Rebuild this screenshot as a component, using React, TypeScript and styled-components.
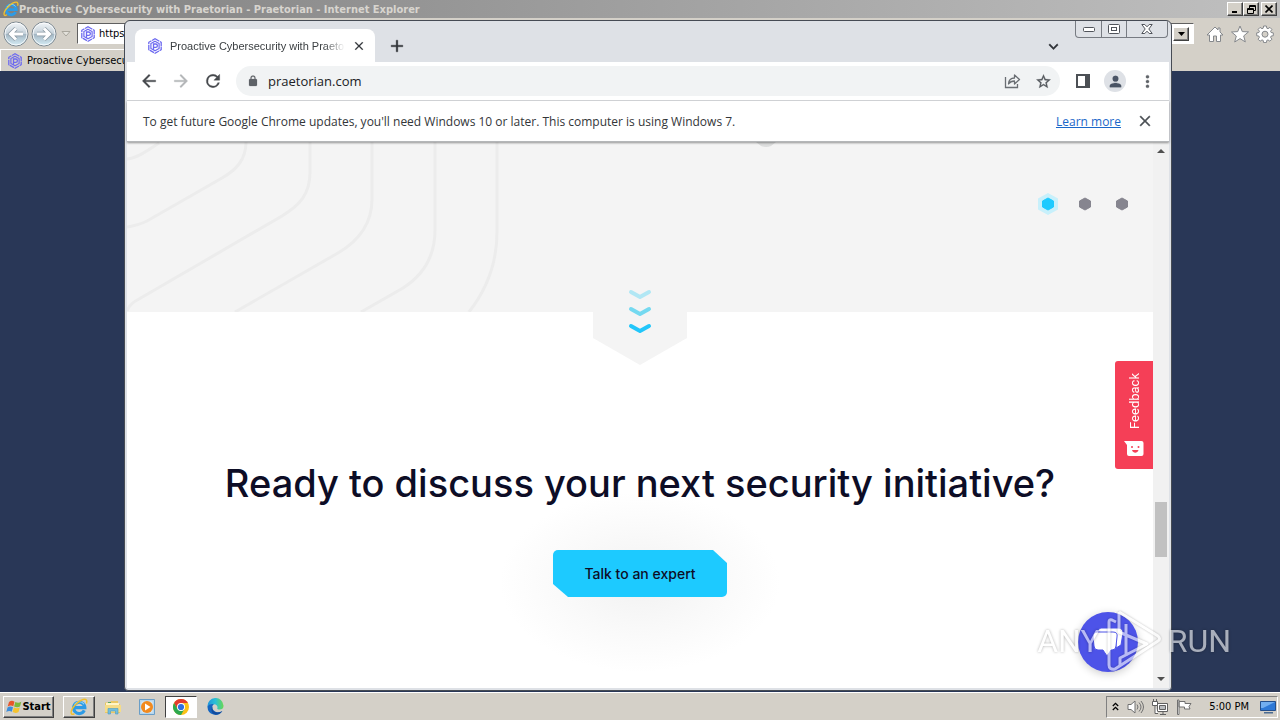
import React from 'react';
import styled, { createGlobalStyle, css } from 'styled-components';

const tahoma = '"DejaVu Sans Condensed", "DejaVu Sans", sans-serif';
const humanist = '"Open Sans", "Noto Sans", sans-serif';
const grotesk = 'Inter, "Liberation Sans", sans-serif';

const GlobalStyle = createGlobalStyle`
  *, *::before, *::after { box-sizing: border-box; }
  body { margin: 0; overflow: hidden; font-family: ${tahoma}; }
  button { padding: 0; border: 0; background: none; color: inherit; font: inherit; cursor: pointer; }
  svg { display: block; flex: none; }
  input { min-width: 0; }
`;

const Desktop = styled.div`
  position: relative;
  display: flex;
  flex-direction: column;
  height: 100vh;
  overflow: hidden;
  background: #293757;
`;

/* Internet Explorer window */
const Explorer = styled.section`
  display: flex;
  flex: 1;
  flex-direction: column;
  min-height: 0;
`;
const ExplorerTitle = styled.header`
  display: flex;
  align-items: center;
  justify-content: space-between;
  height: 18px;
  padding: 0 3px;
  background: linear-gradient(90deg, #808080, #c0c0c0);
  color: #d8d5cf;
  font-size: 11px;
  font-weight: bold;
`;
const TitleText = styled.div`
  display: flex;
  align-items: center;
  white-space: nowrap;
`;
const raised = css`
  border: 1px solid;
  border-color: #fff #404040 #404040 #fff;
  box-shadow: inset -1px -1px #808080;
`;
const ClassicButtons = styled.div`
  display: flex;
  button:last-child { margin-left: 2px; }
`;
const ClassicButton = styled.button`
  ${raised}
  display: grid;
  place-items: center;
  width: 16px;
  height: 14px;
  background: #d4d0c8;
`;
const ExplorerBar = styled.div`
  display: flex;
  align-items: center;
  height: 31px;
  padding: 0 6px 0 2px;
  background: #d4d0c8;
`;
const AddressBox = styled.label`
  display: flex;
  flex: 1;
  align-items: center;
  height: 21px;
  margin: 0 12px 0 4px;
  border: 1px solid;
  border-color: #606060 #fff #fff #606060;
  background: #fff;
  padding: 0 4px 0 2px;
  gap: 3px;
  input { flex: 1; padding: 0; border: 0; outline: 0; font: 11px ${tahoma}; color: #000; }
`;
const ExplorerTools = styled.div`
  display: flex;
  gap: 7px;
`;
const ExplorerTabs = styled.div`
  display: flex;
  height: 22px;
  background: #d4d0c8;
`;
const ExplorerTab = styled.div`
  display: flex;
  align-items: center;
  gap: 4px;
  width: 400px;
  padding-left: 6px;
  border-top: 1px solid #fff;
  border-left: 1px solid #fff;
  font-size: 11px;
  white-space: nowrap;
`;

/* Chrome window */
const ChromeWindow = styled.section`
  position: absolute;
  inset: 20px 108px 29px 124px;
  display: flex;
  flex-direction: column;
  overflow: hidden;
  padding: 0 2px 2px;
  border: 1px solid #464b54;
  border-radius: 6px 6px 4px 4px;
  background: #dee1e6;
`;
const TabStrip = styled.div`
  display: flex;
  align-items: flex-end;
  height: 41px;
  flex: none;
  padding-left: 8px;
`;
const Tab = styled.div`
  display: flex;
  align-items: center;
  width: 240px;
  height: 33px;
  padding: 0 9px 0 12px;
  gap: 7px;
  border-radius: 8px 8px 0 0;
  background: #fff;
`;
const TabTitle = styled.span`
  flex: 1;
  overflow: hidden;
  color: #3c4043;
  font: 11px "Liberation Sans", sans-serif;
  white-space: nowrap;
  mask-image: linear-gradient(90deg, #000 88%, transparent);
`;
const StripButton = styled.button<{ $push?: boolean }>`
  display: grid;
  place-items: center;
  width: 28px;
  height: 28px;
  margin: ${(p) => (p.$push ? '0 102px 2px auto' : '0 0 2px 8px')};
`;
const CaptionButtons = styled.div`
  position: absolute;
  top: 0;
  right: 3px;
  display: flex;
  height: 17px;
  border: 1px solid #777b82;
  border-top: 0;
  border-radius: 0 0 4px 4px;
`;
const CaptionButton = styled.button<{ $wide?: boolean }>`
  display: grid;
  place-items: center;
  width: ${(p) => (p.$wide ? 41 : 25)}px;
  & + & { border-left: 1px solid #777b82; }
`;
const Toolbar = styled.div`
  display: flex;
  align-items: center;
  flex: none;
  height: 39px;
  padding: 0 11px;
  gap: 10px;
  border-bottom: 1px solid #d5d7da;
  background: #fff;
`;
const IconButton = styled.button`
  display: grid;
  place-items: center;
  width: 22px;
  height: 22px;
`;
const Omnibox = styled.label`
  display: flex;
  flex: 1;
  align-items: center;
  height: 30px;
  margin: 0 2px;
  padding: 0 6px 0 11px;
  gap: 9px;
  border-radius: 15px;
  background: #f1f3f4;
  input { flex: 1; padding: 0; border: 0; outline: 0; background: none; color: #202124; font: 13px ${humanist}; }
`;
const Avatar = styled.span`
  display: grid;
  place-items: center;
  width: 22px;
  height: 22px;
  border-radius: 50%;
  background: #dee1e6;
`;
const InfoBar = styled.div`
  position: relative;
  z-index: 1;
  display: flex;
  align-items: center;
  flex: none;
  height: 41px;
  padding: 0 15px 0 16px;
  border-bottom: 1px solid #b4b6b8;
  background: #fff;
  box-shadow: 0 1px 2px #0006;
  color: #333639;
  font: 12px ${humanist};
  white-space: nowrap;
  p { flex: 1; margin: 0; }
  a { margin-right: 15px; color: #1a67c9; }
`;
const Viewport = styled.div`
  display: flex;
  flex: 1;
  min-height: 0;
  background: #fff;
`;
const Page = styled.main`
  position: relative;
  display: flex;
  flex: 1;
  flex-direction: column;
  overflow: hidden;
`;
const Hero = styled.section`
  position: relative;
  display: flex;
  flex: none;
  justify-content: space-between;
  height: 170px;
  background: #f4f4f4;
`;
const Slides = styled.div`
  display: flex;
  gap: 15px;
  padding: 51px 20px 0 0;
`;
const SlideButton = styled.button`
  width: 22px;
  height: 22px;
`;
const HeroBubble = styled.svg`
  position: absolute;
  top: 0;
  left: calc(50% + 116px);
`;
const ScrollHint = styled.svg`
  position: absolute;
  top: 143px;
  left: calc(50% - 47px);
`;
const CallToAction = styled.section`
  display: flex;
  flex: 1;
  flex-direction: column;
  align-items: center;
  padding-top: 146px;
  gap: 42px;
  background: radial-gradient(ellipse 140px 90px at 50% 270px, #f2f2f2, #fafafa 60%, #fff);
`;
const Heading = styled.h1`
  margin: 0;
  color: #0d0d26;
  font: 500 38px/50px ${grotesk};
  white-space: nowrap;
`;
const ExpertButton = styled.button`
  display: grid;
  place-items: center;
  width: 174px;
  height: 47px;
  border-radius: 5px;
  background: #1dcaff;
  clip-path: polygon(0 0, 160px 0, 100% 13px, 100% 100%, 15px 100%, 0 34px);
  color: #0d0d26;
  font: 500 14px/20px ${grotesk};
`;
const FeedbackButton = styled.button`
  position: absolute;
  top: 219px;
  right: 0;
  display: flex;
  flex-direction: column;
  align-items: center;
  justify-content: space-between;
  width: 38px;
  height: 108px;
  padding: 12px 0;
  border-radius: 3px 0 0 3px;
  background: #f53f57;
  color: #fff;
  font: 13px Roboto, sans-serif;
  span { writing-mode: vertical-rl; rotate: 180deg; }
`;
const ChatButton = styled.button`
  position: absolute;
  right: 15px;
  bottom: 16px;
  display: grid;
  place-items: center;
  width: 60px;
  height: 60px;
  border-radius: 50%;
  background: #4d53e8;
  box-shadow: 0 2px 8px #0003;
`;
const ScrollTrack = styled.div`
  display: flex;
  flex-direction: column;
  align-items: center;
  width: 16px;
  padding: 7px 0;
  background: #f1f1f1;
`;
const ScrollThumb = styled.div`
  width: 12px;
  height: 55px;
  margin: 349px 0 auto;
  background: #c1c1c1;
`;

/* Taskbar */
const Taskbar = styled.footer`
  display: flex;
  align-items: center;
  flex: none;
  height: 28px;
  padding: 0 2px 0 3px;
  border-top: 1px solid #fff;
  background: #d4d0c8;
  font-size: 11px;
`;
const StartButton = styled.button`
  ${raised}
  display: flex;
  align-items: center;
  justify-content: center;
  width: 51px;
  height: 22px;
  margin-right: 9px;
  font-weight: bold;
`;
const TaskButton = styled.button<{ $state?: 'open' | 'active' }>`
  display: grid;
  place-items: center;
  width: 32px;
  height: 22px;
  margin-right: 2px;
  ${(p) => p.$state === 'open' && raised}
  ${(p) => p.$state === 'active' && css`border: 1px solid; border-color: #404040 #fff #fff #404040; background: #fff;`}
`;
const Tray = styled.div`
  display: flex;
  align-items: center;
  height: 22px;
  margin-left: auto;
  padding: 0 1px 0 5px;
  gap: 8px;
  border: 1px solid;
  border-color: #808080 #fff #fff #808080;
  time { margin: 0 3px 0 9px; white-space: nowrap; }
`;

const Watermark = styled.div`
  position: absolute;
  right: 49px;
  bottom: 48px;
  display: flex;
  align-items: center;
  gap: 6px;
  color: #fff;
  font: 400 32px/60px Roboto, sans-serif;
  opacity: 0.6;
  text-shadow: 0 0 3px #0008;
  pointer-events: none;
  svg { filter: drop-shadow(0 0 1px #0006); }
`;

const Favicon = ({ size = 16 }: { size?: number }) => (
  <svg width={size} height={size} viewBox="0 0 16 16" fill="none" stroke="#6d6af0">
    <path d="M8 .8 14.2 4.3v7.4L8 15.2 1.8 11.7V4.3z" strokeWidth="1.3" strokeDasharray="5 .7" />
    <path d="M8 3.2 12.1 5.6v4.8L8 12.8 3.9 10.4V5.6z" strokeWidth="1.2" />
    <path d="M6.5 12V6h2.2a1.7 1.7 0 0 1 0 3.4H6.5" strokeWidth="1.3" />
  </svg>
);

const IeLogo = ({ size = 16 }: { size?: number }) => (
  <svg width={size} height={size} viewBox="0 0 16 16" fill="none">
    <path d="M12.7 11A5 5 0 1 1 13.200 8.600H4" stroke="#2d9be6" strokeWidth="2.800" />
    <path d="M12.500 5.500A5 5 0 0 0 4 6" stroke="#8ad6fb" />
    <path d="M14.600 4.800c.8-2.200.2-3.600-1.400-3.600C9 1.200 1.500 8 1 12.600c-.2 2 1 2.400 3 1.200" stroke="#f2c02c" strokeWidth="1.300" />
  </svg>
);

const RoundArrow = ({ back }: { back?: boolean }) => (
  <svg width="28" height="26" viewBox="0 0 28 26">
    <defs>
      <linearGradient id={back ? 'orbBack' : 'orbNext'} x2="0" y2="1">
        <stop stopColor="#f4f7f9" /><stop offset=".48" stopColor="#c5d1da" /><stop offset=".52" stopColor="#a4b7c4" /><stop offset="1" stopColor="#d7eef7" />
      </linearGradient>
    </defs>
    <circle cx="14" cy="13" r="12" fill={`url(#${back ? 'orbBack' : 'orbNext'})`} stroke="#7b8790" />
    <circle cx="14" cy="13" r="11" fill="none" stroke="#fff" strokeOpacity=".8" />
    <path d={back ? 'M21 13H9M14 7.500 8.500 13l5.500 5.500' : 'M7 13h12M14 7.500l5.500 5.500-5.500 5.500'} fill="none" stroke="#8a98a2" strokeWidth="4.500" />
    <path d={back ? 'M21 13H9M14 7.500 8.500 13l5.500 5.500' : 'M7 13h12M14 7.500l5.500 5.500-5.500 5.500'} fill="none" stroke="#fff" strokeWidth="3" />
  </svg>
);

const Glyph = ({ d, size = 18, color = '#5f6368' }: { d: string; size?: number; color?: string }) => (
  <svg width={size} height={size} viewBox="0 0 24 24" fill={color} stroke={color} strokeWidth=".4"><path d={d} /></svg>
);
const glyphs = {
  back: 'M20 11H7.830l5.590-5.590L12 4l-8 8 8 8 1.410-1.410L7.830 13H20v-2z',
  forward: 'M12 4l-1.410 1.410L16.170 11H4v2h12.170l-5.580 5.590L12 20l8-8z',
  reload: 'M17.650 6.350A7.960 7.960 0 0 0 12 4a8 8 0 1 0 7.730 10h-2.080A6 6 0 1 1 12 6c1.660 0 3.140.69 4.220 1.780L13 11h7V4l-2.350 2.350z',
  lock: 'M18 8h-1V6A5 5 0 0 0 7 6v2H6a2 2 0 0 0-2 2v10a2 2 0 0 0 2 2h12a2 2 0 0 0 2-2V10a2 2 0 0 0-2-2zM9 6a3 3 0 0 1 6 0v2H9V6z',
  close: 'M19 6.410 17.590 5 12 10.590 6.410 5 5 6.410 10.590 12 5 17.590 6.410 19 12 13.410 17.590 19 19 17.590 13.410 12z',
  plus: 'M19 13h-6v6h-2v-6H5v-2h6V5h2v6h6v2z',
  down: 'M7.410 8.590 12 13.170l4.590-4.580L18 10l-6 6-6-6z',
  star: 'm22 9.240-7.190-.62L12 2 9.190 8.630 2 9.240l5.460 4.730L5.820 21 12 17.270 18.180 21l-1.630-7.030L22 9.240zM12 15.400l-3.760 2.270 1-4.280-3.320-2.880 4.380-.38L12 6.100l1.710 4.040 4.380.38-3.320 2.880 1 4.280L12 15.400z',
  person: 'M12 12a4 4 0 1 0 0-8 4 4 0 0 0 0 8zm0 2c-2.670 0-8 1.340-8 4v2h16v-2c0-2.660-5.330-4-8-4z',
  more: 'M12 8a2 2 0 1 0 0-4 2 2 0 0 0 0 4zm0 2a2 2 0 1 0 0 4 2 2 0 0 0 0-4zm0 6a2 2 0 1 0 0 4 2 2 0 0 0 0-4z',
};

const ShareIcon = () => (
  <svg width="17" height="16" viewBox="0 0 17 16" fill="none" stroke="#6a6e73" strokeWidth="1.300">
    <path d="M1.500 4v10.500h12V11" />
    <path d="M4.500 11c.3-4 2.500-6 6-6V2l5 4.500-5 4.500V8c-2.700 0-4.500.8-6 3z" strokeLinejoin="round" />
  </svg>
);

const ExplorerTool = ({ d }: { d: string }) => (
  <svg width="18" height="18" viewBox="0 0 18 18" fill="#fff" stroke="#85888c" fillRule="evenodd" strokeLinejoin="round"><path d={d} /></svg>
);

const Contours = () => (
  <svg width="380" height="170" viewBox="0 0 380 170" fill="none" stroke="#ececec" strokeWidth="3">
    <path d="M0 17c10-1 20-8 32-16M0 85c7-1 12-2 20-6l75-43c14-8 24-18 24-36" />
    <path d="M0 169c2-6 6-9 12-12L155 74c18-11 28-22 28-44V0" />
    <path d="M108 170 211 111c24-14 34-32 34-54V0" />
    <path d="M234 170 276 146c22-14 32-34 32-58V0" />
    <path d="M342 170c18-23 28-48 28-80V0" />
  </svg>
);

const SlideDot = ({ active }: { active?: boolean }) => (
  <svg width="22" height="22" viewBox="0 0 22 22">
    {active && <path d="m11 0 10 5.500v11L11 22 1 16.500v-11z" fill="#c8f0fb" />}
    <path d="m11 5 5.500 3v6L11 17l-5.500-3V8z" fill={active ? '#1dcaff' : '#86858f'} stroke={active ? '#1dcaff' : '#86858f'} strokeLinejoin="round" />
  </svg>
);

const WindowsFlag = () => (
  <svg width="16" height="16" viewBox="0 0 16 16">
    <path d="M3 3c2-1.500 3.500-1.500 5.500-.3L7.300 7.300C5.500 6.200 4 6.300 1.700 7.500z" fill="#e8562a" />
    <path d="M9.300 3c2 1 4 1 6-.2L14 7.500c-2 1-4 .9-5.900-.1z" fill="#7bb93a" />
    <path d="M1.500 8.400C3.500 7.200 5.200 7.300 7 8.300l-1.200 4.400C4 11.700 2.300 11.800.3 12.900z" fill="#3c8ddb" />
    <path d="M7.900 8.500c1.900 1 3.900 1 5.900 0l-1.300 4.500c-2 1.200-4 1.100-5.900.1z" fill="#f5c32e" />
  </svg>
);
const FolderIcon = () => (
  <svg width="18" height="16" viewBox="0 0 18 16">
    <path d="M1 3.500h5l1-1.500h7v3h2v9H1z" fill="#e9c765" />
    <path d="M2 4h13v5H2z" fill="#fff5c8" /><path d="M1 6h16v7H1z" fill="#f5dc88" />
    <path d="M4 15v-5.500h10V15h-2.500v-3h-5v3z" fill="#72bddd" stroke="#4c9cc3" strokeWidth=".6" />
    <path d="M4 3.500h3" stroke="#59a862" />
  </svg>
);
const PlayerIcon = () => (
  <svg width="16" height="16" viewBox="0 0 16 16">
    <path d="M.5.500h15v15H.500z" fill="#b6d6ed" stroke="#6a9ec7" /><path d="M2.500 2.500h11v11h-11z" fill="#dcecf7" />
    <circle cx="8" cy="8" r="6" fill="#f18a1f" /><path d="M6 4.500 11.500 8 6 11.500z" fill="#fff" />
  </svg>
);
const ChromeLogo = () => (
  <svg width="16" height="16" viewBox="0 0 16 16">
    <circle cx="8" cy="8" r="8" fill="#fbc116" />
    <path d="M8 4h6.930A8 8 0 0 0 1.070 4l3.470 6z" fill="#e33b2e" />
    <path d="M4.540 10 1.070 4A8 8 0 0 0 8 16l3.460-6z" fill="#2da94f" />
    <circle cx="8" cy="8" r="4" fill="#fff" /><circle cx="8" cy="8" r="3.100" fill="#2f6fe0" />
  </svg>
);
const EdgeLogo = () => (
  <svg width="17" height="17" viewBox="0 0 17 17">
    <defs>
      <linearGradient id="edgeWave"><stop stopColor="#2195dc" /><stop offset=".5" stopColor="#2bc0d6" /><stop offset="1" stopColor="#6ad951" /></linearGradient>
    </defs>
    <path d="M.5 8.500A8 8 0 0 1 16.500 7.500c.2 2.500-1.500 4-4 4-1.500 0-2.500-.5-2.200-1.300C11 8.500 9.800 6.500 7 6.300 3.500 6 1 7.500.5 9.500z" fill="url(#edgeWave)" />
    <path d="M.5 9C1 6.500 4.500 5.500 7 6.300 4.500 7.500 4.500 12 8.500 13.700c2.500 1 5 .5 6.800-.7A8 8 0 0 1 .5 9z" fill="#1565c0" />
    <path d="M5.500 8.500C4.500 12 7 14.500 10.500 14.400c2 0 3.600-.6 4.800-1.400-1.800 3-5 3.700-7 3.500C4.500 16 3.500 11 5.500 8.500z" fill="#124b9c" />
  </svg>
);

const ScrollArrow = ({ down }: { down?: boolean }) => (
  <svg width="8" height="4" viewBox="0 0 8 4" fill="#505050"><path d={down ? 'M0 0h8L4 4z' : 'M0 4h8L4 0z'} /></svg>
);

const FeedbackFace = () => (
  <svg width="20" height="16" viewBox="0 0 20 16">
    <path d="M0 0h17.500a2 2 0 0 1 2 2v11a2 2 0 0 1-2 2H5a2 2 0 0 1-2-2V4z" fill="#fff" />
    <circle cx="8" cy="6" r="1" fill="#f53f57" /><circle cx="14.500" cy="6" r="1" fill="#f53f57" />
    <path d="M8 9h6.500c-1 3.600-5.500 3.600-6.500 0z" fill="#f53f57" />
  </svg>
);

const pageTitle = 'Proactive Cybersecurity with Praetorian - Praetorian';

export default function App() {
  return (
    <Desktop>
      <GlobalStyle />
      <Explorer>
        <ExplorerTitle>
          <TitleText><IeLogo />{pageTitle} - Internet Explorer</TitleText>
          <ClassicButtons>
            <ClassicButton aria-label="Minimize"><svg width="8" height="8"><path d="M1 6h5v2H1z" /></svg></ClassicButton>
            <ClassicButton aria-label="Restore"><svg width="9" height="9" fill="none" stroke="#000"><path d="M2.500 3V.5h6v5H6.500M2.500 1.500h6M.5 3.500h6v5h-6zM.5 4.500h6" /></svg></ClassicButton>
            <ClassicButton aria-label="Close"><svg width="8" height="8" stroke="#000" strokeWidth="1.600"><path d="m.5.500 7 7m0-7-7 7" /></svg></ClassicButton>
          </ClassicButtons>
        </ExplorerTitle>
        <ExplorerBar>
          <button aria-label="Back"><RoundArrow back /></button>
          <button aria-label="Forward"><RoundArrow /></button>
          <button aria-label="Recent pages"><svg width="15" height="8" viewBox="0 0 15 8" fill="#e4e2dc" stroke="#a9a69d"><path d="M4 1.500h8L8 6z" /></svg></button>
          <AddressBox>
            <Favicon />
            <input aria-label="Address" defaultValue="https://www.praetorian.com/" />
            <ClassicButton aria-label="Show address list"><svg width="7" height="4"><path d="M0 0h7L3.500 4z" /></svg></ClassicButton>
          </AddressBox>
          <ExplorerTools>
            <button aria-label="Home"><ExplorerTool d="M9 2 1 10h2.500v6.500h4V11h3v5.500h4V10H17l-3-3V3h-2v2z" /></button>
            <button aria-label="Favorites"><ExplorerTool d="m9 1 2.300 5.600 6.200.3-4.800 4 1.600 6L9 13.600 3.700 17l1.600-6-4.800-4 6.200-.4z" /></button>
            <button aria-label="Tools"><ExplorerTool d="m7.600 1h2.800l.4 2.200 1.200.5 1.900-1.300 2 2-1.300 1.900.5 1.200 2.200.4v2.800l-2.200.4-.5 1.200 1.300 1.900-2 2-1.900-1.300-1.200.5-.4 2.200H7.600l-.4-2.200-1.200-.5-1.900 1.300-2-2 1.300-1.900-.5-1.200L.7 10.700V7.900l2.200-.4.5-1.200-1.300-1.900 2-2L6 3.700l1.200-.5zM9 6.200a3 3 0 1 0 0 6 3 3 0 0 0 0-6z" /></button>
          </ExplorerTools>
        </ExplorerBar>
        <ExplorerTabs><ExplorerTab><Favicon />{pageTitle}</ExplorerTab></ExplorerTabs>
      </Explorer>

      <ChromeWindow>
        <TabStrip>
          <Tab>
            <Favicon />
            <TabTitle>{pageTitle}</TabTitle>
            <button aria-label="Close tab"><Glyph d={glyphs.close} size={14} color="#303338" /></button>
          </Tab>
          <StripButton aria-label="New tab"><Glyph d={glyphs.plus} size={20} color="#303338" /></StripButton>
          <StripButton $push aria-label="Search tabs"><Glyph d={glyphs.down} size={19} color="#303338" /></StripButton>
        </TabStrip>
        <CaptionButtons>
          <CaptionButton aria-label="Minimize"><svg width="12" height="5" fill="#fff" stroke="#50545b"><rect x=".5" y=".5" width="11" height="4" rx="1" /></svg></CaptionButton>
          <CaptionButton aria-label="Maximize"><svg width="12" height="10" fill="#fff" stroke="#50545b"><rect x=".5" y=".5" width="11" height="9" rx="1" /><rect x="3.500" y="3.500" width="5" height="3" /></svg></CaptionButton>
          <CaptionButton $wide aria-label="Close"><svg width="12" height="10" viewBox="0 0 12 10" fill="#fff" stroke="#50545b"><path d="M.8.500h3L6 2.800 8.200.500h3L7.800 5l3.400 4.500h-3L6 7.200 3.800 9.500h-3L4.200 5z" /></svg></CaptionButton>
        </CaptionButtons>
        <Toolbar>
          <IconButton aria-label="Back"><Glyph d={glyphs.back} size={20} color="#46494d" /></IconButton>
          <IconButton aria-label="Forward"><Glyph d={glyphs.forward} size={20} color="#b4b6b8" /></IconButton>
          <IconButton aria-label="Reload"><Glyph d={glyphs.reload} size={20} color="#46494d" /></IconButton>
          <Omnibox>
            <Glyph d={glyphs.lock} size={12} />
            <input aria-label="Address and search bar" defaultValue="praetorian.com" />
            <IconButton aria-label="Share"><ShareIcon /></IconButton>
            <IconButton aria-label="Bookmark"><Glyph d={glyphs.star} size={17} color="#55595e" /></IconButton>
          </Omnibox>
          <IconButton aria-label="Side panel"><svg width="14" height="14" fill="none" stroke="#4c5055" strokeWidth="2"><path d="M1 1h12v12H1z" /><path d="M9 0h5v14H9z" fill="#4c5055" stroke="none" /></svg></IconButton>
          <button aria-label="Profile"><Avatar><Glyph d={glyphs.person} size={17} color="#4b5566" /></Avatar></button>
          <IconButton aria-label="Menu"><Glyph d={glyphs.more} size={19} /></IconButton>
        </Toolbar>
        <InfoBar>
          <p>To get future Google Chrome updates, you'll need Windows 10 or later. This computer is using Windows 7.</p>
          <a href="#learn">Learn more</a>
          <button aria-label="Dismiss"><Glyph d={glyphs.close} size={18} color="#4c5055" /></button>
        </InfoBar>
        <Viewport>
          <Page>
            <Hero>
              <Contours />
              <HeroBubble width="20" height="6" viewBox="0 0 20 6"><path d="M0 0h20l-5 4q-5 2-10 0z" fill="#dcdddd" /></HeroBubble>
              <Slides>
                <SlideButton aria-label="Slide 1"><SlideDot active /></SlideButton>
                <SlideButton aria-label="Slide 2"><SlideDot /></SlideButton>
                <SlideButton aria-label="Slide 3"><SlideDot /></SlideButton>
              </Slides>
              <ScrollHint width="94" height="80" viewBox="0 0 94 80" fill="none" strokeWidth="4" strokeLinecap="round" strokeLinejoin="round">
                <path d="M0 0h94v53L47 80 0 53z" fill="#f4f4f4" />
                <path d="m38 7 9 5 9-5" stroke="#b1e7f4" /><path d="m38 24 9 5 9-5" stroke="#74d9f0" /><path d="m38 41 9 5 9-5" stroke="#22c6fa" />
              </ScrollHint>
            </Hero>
            <CallToAction>
              <Heading>Ready to discuss your next security initiative?</Heading>
              <ExpertButton>Talk to an expert</ExpertButton>
            </CallToAction>
            <FeedbackButton><span>Feedback</span><FeedbackFace /></FeedbackButton>
            <ChatButton aria-label="Open chat">
              <svg width="32" height="32" viewBox="0 0 32 32" fill="#fff" stroke="#4d53e8">
                <path d="M9 2h17q5 0 5 5l-2 12-5 3V10L6 6q0-4 3-4z" />
                <path d="M6 6h15q5 0 4 5l-1 9q0 4-4 4h-1l-4 6-4-6H6q-4 0-4-4l-1-9q0-5 5-5z" />
              </svg>
            </ChatButton>
          </Page>
          <ScrollTrack><ScrollArrow /><ScrollThumb /><ScrollArrow down /></ScrollTrack>
        </Viewport>
      </ChromeWindow>

      <Taskbar>
        <StartButton><WindowsFlag />Start</StartButton>
        <TaskButton $state="open" aria-label="Internet Explorer"><IeLogo size={18} /></TaskButton>
        <TaskButton aria-label="Windows Explorer"><FolderIcon /></TaskButton>
        <TaskButton aria-label="Media Player"><PlayerIcon /></TaskButton>
        <TaskButton $state="active" aria-label="Google Chrome"><ChromeLogo /></TaskButton>
        <TaskButton aria-label="Microsoft Edge"><EdgeLogo /></TaskButton>
        <Tray>
          <svg width="7" height="9" fill="none" stroke="#000" strokeWidth="1.300"><path d="m.8 4 2.700-2.700L6.200 4M.8 8l2.700-2.700L6.200 8" /></svg>
          <svg width="17" height="16" viewBox="0 0 17 16" fill="#fff" stroke="#707070"><path d="M1 5.500h3L8 2v12l-4-3.500H1z" /><path d="M10 5.500q2 2.500 0 5M12 3.500q4 4.500 0 9M14 2q5 6 0 12" fill="none" /></svg>
          <svg width="16" height="16" viewBox="0 0 16 16" fill="#fff" stroke="#606060"><path d="M5.500 4.500h10v8h-10zM8 15.500h6M11 12.500v3" /><path d="M7.500 6.500h6v4h-6z" fill="#b9bcbf" /><path d="M.5 2.500h5v4h-5zM1.500 0v2M4.500 0v2M3 6.500v8h3" /></svg>
          <svg width="16" height="16" viewBox="0 0 16 16" fill="#fff" stroke="#707070"><path d="M1.500 1v14.500h1.500V1zM3 2.500h6v2h6l-2 3 1 2.500H8.500V8H3z" /></svg>
          <time>5:00 PM</time>
          <svg width="16" height="14" viewBox="0 0 16 14"><path d="M.5 1.500h15v9H.5z" fill="#2f79d6" stroke="#244f8c" /><path d="M1 2h14L3 8H1z" fill="#72aef0" /><path d="M4 12h9v1.500H4z" fill="#4b6b91" /></svg>
        </Tray>
      </Taskbar>

      <Watermark>
        ANY
        <svg width="56" height="62" viewBox="0 0 56 62" fill="none" stroke="#fff" strokeWidth="3" strokeLinejoin="round">
          <path d="M13 2 52 26q3 3 0 5L9 59q-6 1-6-4V12q0-3 3-2l4 2" /><path d="M13 2v20l28 12-27 14v8M20 14v32" />
        </svg>
        RUN
      </Watermark>
    </Desktop>
  );
}
